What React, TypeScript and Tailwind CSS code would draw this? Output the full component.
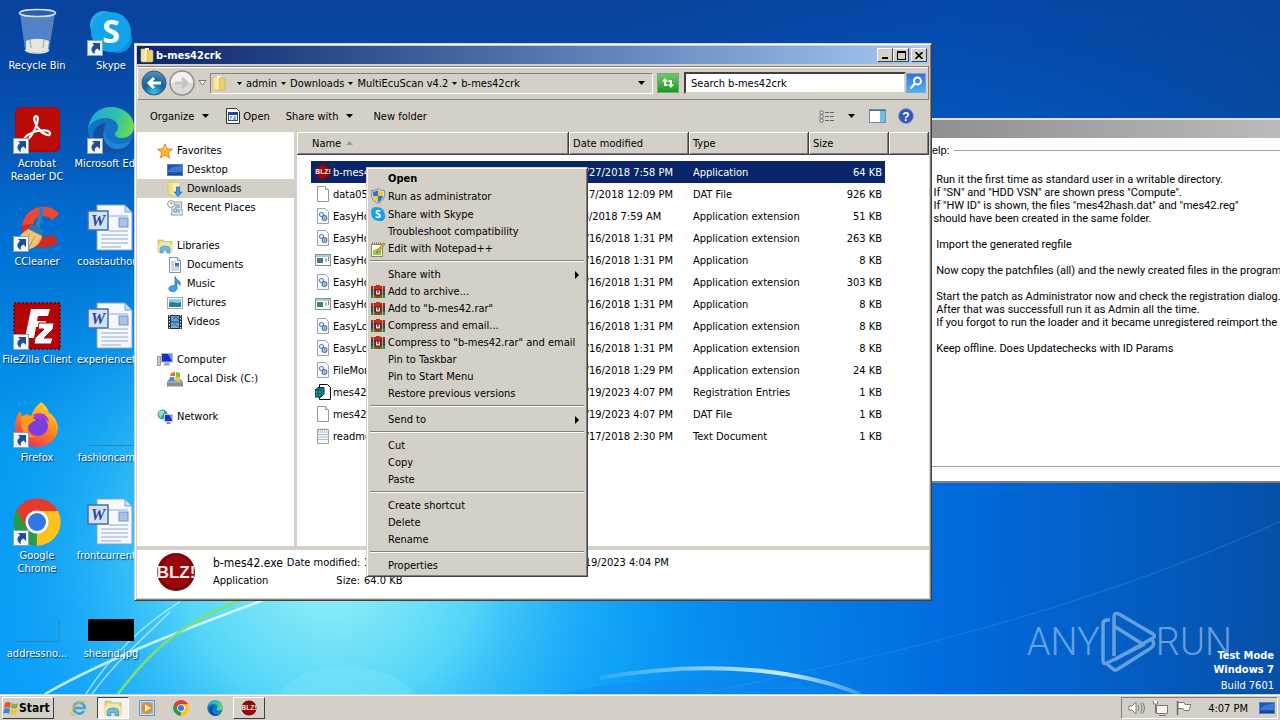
import type { ReactNode } from 'react';

const RAISED = 'border border-t-white border-l-white border-r-[#404040] border-b-[#404040] bg-[#d4d0c8]';
const SUNKEN = 'border border-t-[#808080] border-l-[#808080] border-r-white border-b-white';

/* ---------- icons ---------- */

interface IconProps {
  size?: number;
}

function Svg({ size = 16, box = 16, children }: { size?: number; box?: number; children: ReactNode }) {
  return (
    <svg width={size} height={size} viewBox={`0 0 ${box} ${box}`} className="shrink-0" aria-hidden="true">
      {children}
    </svg>
  );
}

function BlzIcon({ size = 16 }: IconProps) {
  return (
    <Svg size={size} box={40}>
      <circle cx="20" cy="20" r="19" fill="#7c0406" />
      <circle cx="20" cy="20" r="16" fill="#96080a" />
      <text x="20" y="26" textAnchor="middle" fontSize="17" fontWeight="700" fill="#f7e9e6" fontFamily="Liberation Sans, sans-serif">
        BLZ!
      </text>
    </Svg>
  );
}

function SkypeIcon({ size = 16 }: IconProps) {
  return (
    <Svg size={size} box={48}>
      <circle cx="17" cy="17" r="14" fill="#28a8ea" />
      <circle cx="31" cy="31" r="14" fill="#0d8fdc" />
      <circle cx="24" cy="24" r="20" fill="#13a2ec" />
      <text x="24" y="35" textAnchor="middle" fontSize="32" fontWeight="700" fill="#fff" fontFamily="Open Sans, sans-serif">
        S
      </text>
    </Svg>
  );
}

function ChromeIcon({ size = 16 }: IconProps) {
  return (
    <Svg size={size} box={48}>
      <path d="M24 24 3.6 12.5A23.5 23.5 0 0 1 44.4 12.3Z" fill="#e33b2e" />
      <path d="M24 24 44.4 12.3A23.5 23.5 0 0 1 23.5 47.5Z" fill="#fcc31e" />
      <path d="M24 24 23.5 47.5A23.5 23.5 0 0 1 3.6 12.3Z" fill="#2b9a47" />
      <path d="M24 13H44.8A23.5 23.5 0 0 0 3.6 12.3L14 30Z" fill="#e33b2e" />
      <path d="M34 30 23.5 47.5A23.5 23.5 0 0 0 44.8 13H26Z" fill="#fcc31e" />
      <circle cx="24" cy="24" r="11.5" fill="#fff" />
      <circle cx="24" cy="24" r="9" fill="#3277e6" />
    </Svg>
  );
}

function EdgeIcon({ size = 16 }: IconProps) {
  return (
    <Svg size={size} box={48}>
      <defs>
        <linearGradient id="edgeTop" x1="0" x2="1" y1="0.3" y2="0.5">
          <stop offset="0" stopColor="#21a5dc" />
          <stop offset="0.6" stopColor="#2fc2a8" />
          <stop offset="1" stopColor="#6fdc4a" />
        </linearGradient>
      </defs>
      <circle cx="24" cy="24" r="23" fill="#1272c4" />
      <path d="M1.5 20C4 8 13 1 24 1c14 0 23 10 23 19 0 8-6 12-12 12-5 0-7-2-7-4s3-3 3-7c0-5-5-9-12-9C11 12 4 16 1.5 22Z" fill="url(#edgeTop)" />
      <path d="M17 24c-3 10 4 19 14 19 5 0 9-2 12-5-4 7-11 9.500-19 9.500C13 47 6 38 6 30c0-7 6-13 13-13-1 2-2 4-2 7Z" fill="#124f9e" />
      <path d="M17 24c0 7 6 14 15 14 4 0 8-1 11-3-3 6-8 8-13 8-9 0-15-9-13-19Z" fill="#1c87d6" />
    </Svg>
  );
}

function RecycleBinIcon() {
  return (
    <Svg size={48} box={48}>
      <path d="M7 5 12 42c2 3 20 3 24 0L42 5Z" fill="#86aee0" fillOpacity="0.6" />
      <path d="M13 33c6-3 16-3 23 0l-1 9c-5 3-18 3-22 0Z" fill="#e9e6e0" />
      <path d="M14 8l4 32M34 8l-4 32M10 16c8 10 18 12 28 2M11 26l12-10 13 14" stroke="#4f83c8" strokeWidth="1.500" fill="none" opacity="0.5" />
      <ellipse cx="24.500" cy="5" rx="18" ry="3.500" fill="#2d5fa8" stroke="#d8e4f2" strokeWidth="1.500" />
      <path d="M12 42c5 4 20 4 24 0" stroke="#eee" strokeWidth="1.500" fill="none" />
    </Svg>
  );
}

function AcrobatIcon() {
  return (
    <Svg size={48} box={48}>
      <rect x="2" y="1" width="45" height="45" rx="6" fill="#a80808" />
      <rect x="3" y="2" width="43" height="42" rx="5" fill="#bb0b08" />
      <path
        d="M12 34c-2-3 5-7 12-9 6-1 12-1 13 2 1 4-7 2-12-5-4-6-5-11-2-12 3 0 2 6-1 13-3 6-7 12-10 11Z"
        fill="none"
        stroke="#fff"
        strokeWidth="2.200"
        strokeLinejoin="round"
      />
    </Svg>
  );
}

function CCleanerIcon() {
  return (
    <Svg size={48} box={48}>
      <path d="M46 10C38-2 13 0 9 21c-2 16 14 30 36 18l-5-9c-9 7-20 1-20-7 0-9 10-15 19-7Z" fill="#d6281f" />
      <path d="M46 10C38-2 13 0 9 21l11-1c2-9 12-11 19-4Z" fill="#e84b38" />
      <path d="m29 5-5 21" stroke="#2386c4" strokeWidth="4" strokeLinecap="round" />
      <path d="M18 20l13 6-2 6-14-6Z" fill="#2c78ac" />
      <path d="M15 25 29 32C28 40 20 46 10 46 0 42 3 33 15 25Z" fill="#efc479" />
      <path d="m17 30-7 13M22 32l-7 13" stroke="#c9924a" strokeWidth="1" />
    </Svg>
  );
}

function FileZillaIcon() {
  return (
    <Svg size={48} box={48}>
      <rect x="1" y="1" width="46" height="46" fill="#a80204" stroke="#7d0306" strokeWidth="2" strokeDasharray="2 2" />
      <rect x="3" y="3" width="42" height="42" fill="#b50407" />
      <path d="M12 36 18 7h19l-2 7H25l-1 5h9l-1 6h-9l-2 11Z" fill="#fff" />
      <path d="M26 21h15l-1 6-9 9h9l-2 6H21l1-6 9-9h-6Z" fill="#fff" stroke="#b50407" strokeWidth="1" />
    </Svg>
  );
}

function FirefoxIcon() {
  return (
    <Svg size={48} box={48}>
      <defs>
        <linearGradient id="ffBody" x1="0.8" x2="0.2" y1="0" y2="1">
          <stop offset="0" stopColor="#ffe03a" />
          <stop offset="0.45" stopColor="#ff8a1e" />
          <stop offset="1" stopColor="#f0245c" />
        </linearGradient>
      </defs>
      <path d="M28 2c4 3 7 6 8 11 3 1 8 6 9 14 0 11-9 20-21 20C11 47 2 38 2 27c0-7 2-12 5-16l2 5 5-2 4 2c3-8 6-10 10-14Z" fill="url(#ffBody)" />
      <circle cx="25" cy="26" r="10" fill="#7a3ee0" />
      <path d="M8 17c6-3 12 0 15 3-3 1-5 3-8 6-2 6 3 11 9 11-10 3-17-6-16-20Z" fill="#ff9a1f" />
      <path d="M20 15c7-4 15-1 16 7-4-4-9-4-12-3Z" fill="#a33bd4" />
    </Svg>
  );
}

function WordIcon() {
  return (
    <Svg size={48} box={48}>
      <path d="M10 1h28l7 7v38H10Z" fill="#f6faff" stroke="#7da3dc" />
      <path d="M38 1v7h7Z" fill="#c9dcf5" stroke="#7da3dc" />
      <path d="M14 31h27M14 35h27M14 39h27M14 43h20M22 12h19M22 27h19" stroke="#8fa5dc" />
      <rect x="32" y="14" width="9" height="9" fill="#a8c2e8" stroke="#6f92cc" />
      <rect x="1" y="7" width="20" height="19" fill="#d4e2f6" stroke="#4569b4" strokeWidth="1.500" />
      <text x="11" y="22" textAnchor="middle" fontSize="16" fontWeight="700" fontStyle="italic" fill="#27489c" fontFamily="Liberation Serif, serif">
        W
      </text>
    </Svg>
  );
}

function FolderIcon({ size = 16 }: IconProps) {
  return (
    <Svg size={size}>
      <path d="M2 2h5l1 1v12H3L2 14Z" fill="#f7e69a" stroke="#d2b54c" strokeWidth="0.6" />
      <path d="M6 1h4v13H6Z" fill="#fffbe0" />
      <path d="M8 3h5l1 1v10l-1 1H8Z" fill="#efd068" stroke="#c9a43c" strokeWidth="0.6" />
    </Svg>
  );
}

function LibraryIcon({ size = 16 }: IconProps) {
  return (
    <Svg size={size}>
      <path d="M1 2h5l1 1.500h8V14H1Z" fill="#ecd372" stroke="#c3a23f" strokeWidth="0.6" />
      <path d="M3 4h10v4H3Z" fill="#d5f0c4" />
      <path d="M1 6h14v8H1Z" fill="#f5e6a0" />
      <path d="M3 15v-4c0-2 2-3 5-3s5 1 5 3v4h-3v-3H6v3Z" fill="#6bb9e8" stroke="#3a87bd" strokeWidth="0.6" />
    </Svg>
  );
}

function StarIcon() {
  return (
    <Svg>
      <path d="m8 .8 2.100 5 5.400.4-4.200 3.500 1.400 5.300L8 12.200 3.300 15l1.400-5.300L.5 6.200l5.400-.4Z" fill="#ffb52e" stroke="#d97814" strokeWidth="0.8" />
      <path d="m8 3 1.300 3.500H6.700Z" fill="#ffe49a" />
    </Svg>
  );
}

function DesktopIcon({ size = 16 }: IconProps) {
  return (
    <Svg size={size}>
      <rect x="0.500" y="2.500" width="15" height="11" fill="#1c55b4" stroke="#4d80c4" />
      <path d="M1 9C6 3 10 5 15 3v7H1Z" fill="#4a92e2" opacity="0.6" />
      <path d="M1 11.500h14V13H1Z" fill="#24427a" />
    </Svg>
  );
}

function DownloadsIcon() {
  return (
    <Svg>
      <path d="M1 1h6v13H2l-1-1Z" fill="#f7e08c" stroke="#d1b04a" strokeWidth="0.6" />
      <path d="M6 2h6v12H6Z" fill="#fbeeb0" />
      <path d="M9.500 6h3v5H15l-4 4.500L7 11h2.500Z" fill="#2f9be8" stroke="#1668b0" strokeWidth="0.7" />
    </Svg>
  );
}

function RecentIcon() {
  return (
    <Svg>
      <path d="M5 2h10l-1 8h2v5H4l1-4Z" fill="#e4ebf0" stroke="#7a8a94" strokeWidth="0.8" />
      <path d="M8 5h5M8 7h5M7 9h3v3H7ZM12 9v4" stroke="#5f8fae" fill="none" />
      <circle cx="4" cy="4" r="3.400" fill="#fff" stroke="#8a969e" />
      <path d="M4 2v2h1.500" stroke="#555" strokeWidth="0.8" fill="none" />
    </Svg>
  );
}

function DocumentIcon() {
  return (
    <Svg>
      <path d="M2.500.5h8l3 3v12h-11Z" fill="#fff" stroke="#8494a8" />
      <path d="M10.500.5v3h3" fill="#dce6f2" stroke="#8494a8" />
      <path d="M4 5h5M4 7h3M4 9h3M4 11h8M4 13h8" stroke="#8fb0d4" />
      <rect x="8" y="6" width="4" height="3.500" fill="#3a78b8" />
    </Svg>
  );
}

function MusicIcon() {
  return (
    <Svg>
      <path d="M8 .5c1 4 6 3 5 9-1-2-2-3-3-3v6c0 3.500-7 4-8 1S5 9 8 10Z" fill="#3fa0e6" stroke="#1c6fb6" strokeWidth="0.8" />
    </Svg>
  );
}

function PictureIcon() {
  return (
    <Svg>
      <rect x="0.500" y="2.500" width="15" height="11" fill="#fff" stroke="#9aa8b4" />
      <rect x="2" y="4" width="12" height="8" fill="#8cccf0" />
      <path d="M2 8c4-3 7 2 12-1v5H2Z" fill="#2b7c8c" />
    </Svg>
  );
}

function VideoIcon() {
  return (
    <Svg>
      <rect x="1" y="1" width="14" height="14" fill="#2b3038" />
      <path d="M2.500 1v14M13.500 1v14" stroke="#e8eef4" strokeDasharray="1.500 1.500" />
      <rect x="4" y="2" width="8" height="5.500" fill="#5da4dc" />
      <rect x="4" y="8.500" width="8" height="5.500" fill="#6fb4e2" />
      <path d="m6 5 3-2 3 3M5 12l3-2 4 3" stroke="#2d5c86" fill="none" />
    </Svg>
  );
}

function ComputerIcon() {
  return (
    <Svg>
      <rect x="0.500" y="4.500" width="3" height="9" fill="#c4c9d0" stroke="#80868e" strokeWidth="0.7" />
      <rect x="4" y="1" width="12" height="9.500" fill="#aeb8c8" />
      <rect x="5" y="2" width="10" height="7.500" fill="#1a2fd0" />
      <path d="M11 2h4v7Z" fill="#6f9af4" />
      <path d="M8 10.500h4l1 3H6Z" fill="#9aa2ae" />
    </Svg>
  );
}

function DiskIcon() {
  return (
    <Svg>
      <path d="M2 9h12l2 3v3H0v-3Z" fill="#a3abb0" stroke="#5c666c" strokeWidth="0.7" />
      <path d="M1 13h14" stroke="#4b8a50" />
      <path d="M4 2l4-1v4H3Z" fill="#f0682c" />
      <path d="M9 1l4 1v4H9Z" fill="#80bc3c" />
      <path d="M3 6h4v4H2Z" fill="#3c8ce0" />
      <path d="M8 6h5v4H8Z" fill="#f8c52c" />
    </Svg>
  );
}

function NetworkIcon() {
  return (
    <Svg>
      <circle cx="5.500" cy="5.500" r="5" fill="#2f9fbd" />
      <path d="M2 3c3-3 6-1 5 1S4 6 4 9C2 8 1 6 2 3Z" fill="#9be0b4" />
      <rect x="7" y="5" width="9" height="8" fill="#c2cad6" />
      <rect x="8" y="6" width="7" height="6" fill="#1b2fca" />
      <path d="M12 6h3v5Z" fill="#6f94f0" />
      <path d="M10 13h3l1 2H9Z" fill="#8c94a0" />
    </Svg>
  );
}

function BlankFileIcon() {
  return (
    <Svg>
      <path d="M2.500.5h8l3 3v12h-11Z" fill="#fdfdfd" stroke="#9a9a9a" />
      <path d="M10.500.5v3h3" fill="#eee" stroke="#9a9a9a" />
    </Svg>
  );
}

function DllIcon() {
  return (
    <Svg>
      <path d="M2.500.5h8l3 3v12h-11Z" fill="#f6f9fd" stroke="#9aa4b0" />
      <circle cx="6.500" cy="6.500" r="2" fill="#fff" stroke="#5b82b4" strokeWidth="1.200" />
      <circle cx="9.500" cy="10" r="2.300" fill="#dbe7f4" stroke="#4d77ac" strokeWidth="1.200" />
      <circle cx="9.500" cy="10" r="0.800" fill="#3c679e" />
    </Svg>
  );
}

function ExeIcon() {
  return (
    <Svg>
      <rect x="0.500" y="2.500" width="15" height="11" fill="#fff" stroke="#83919b" />
      <path d="M1 4h14" stroke="#b9c5ce" strokeWidth="2" />
      <rect x="2" y="6" width="6" height="5" fill="#3d7f80" />
      <path d="M10 7h2M10 9h2M13.500 5v4" stroke="#76828c" />
    </Svg>
  );
}

function RegIcon() {
  return (
    <Svg>
      <path d="M4.500.5h8l3 3v12h-11Z" fill="#fff" stroke="#111" />
      <path d="m0 6 3-2.500h6V10l-3 3H0Z" fill="#10a5a0" stroke="#0c2c2c" />
      <path d="M0 6h6v7M6 6l3-2.500M3 6v7M0 9.500h6l3-3M6 3.500 3 6" stroke="#0c3d3d" fill="none" strokeWidth="0.8" />
    </Svg>
  );
}

function TextIcon() {
  return (
    <Svg>
      <path d="M2.500 1.500h11v14h-11Z" fill="#f4f8fb" stroke="#9aa4ae" />
      <path d="M3 4h10M3 6.500h10M3 9h10M3 11.500h10" stroke="#a9c0d2" />
      <path d="M3 1.500h10" stroke="#8f9aa4" strokeDasharray="1 1" strokeWidth="2" />
    </Svg>
  );
}

function ShieldIcon() {
  return (
    <Svg>
      <path d="M8 .5c2 1.500 4 2 6.500 2 1 6-1 10-6.500 13C2.500 12.500.5 8.500 1.500 2.500c2.500 0 4.500-.5 6.500-2Z" fill="#dfe6ee" stroke="#6f8aa8" />
      <path d="M8 2v6H3c-.3-1.500-.3-3-.2-4.500C5 3.500 6.500 3 8 2Z" fill="#2f74d0" />
      <path d="M8 2c1.500 1 3 1.500 5.200 1.500.1 1.500.1 3-.2 4.500H8Z" fill="#f5c928" />
      <path d="M8 8H3c.7 3 2 5 5 6.500Z" fill="#f5c928" />
      <path d="M8 8h5c-.7 3-2 5-5 6.500Z" fill="#2f74d0" />
    </Svg>
  );
}

function NotepadIcon() {
  return (
    <Svg>
      <rect x="1.500" y="3.500" width="11" height="12" fill="#fbfbf4" stroke="#8a8a70" />
      <path d="M2 2.500h10" stroke="#777" strokeDasharray="1 1" strokeWidth="2" />
      <path d="M3 10c3-3 6-2 8-4v8H3Z" fill="#8bd048" />
      <path d="m7 10 6-8 2 1-6 8-3 1Z" fill="#e8b83a" stroke="#7a5a14" strokeWidth="0.6" />
    </Svg>
  );
}

function RarIcon() {
  return (
    <Svg>
      <rect x="1" y="2" width="14" height="4" fill="#b02a2a" />
      <rect x="1" y="6" width="14" height="4" fill="#2846b0" />
      <rect x="1" y="10" width="14" height="4" fill="#2c8a38" />
      <path d="M1 6h14M1 10h14" stroke="#222" strokeWidth="0.7" />
      <path d="M3.500 2v12M12.500 2v12" stroke="#d8a43c" />
      <rect x="6" y="1" width="4" height="13" fill="#b83228" />
      <rect x="5.500" y="6" width="5" height="5" fill="#f0d9c8" stroke="#6c1b14" />
      <path d="M8 5v4" stroke="#9c2020" strokeWidth="1.500" />
    </Svg>
  );
}

function OpenAppIcon() {
  return (
    <Svg>
      <path d="M1.500.5h10l3 3v12h-13Z" fill="#fff" stroke="#333" />
      <rect x="3" y="4" width="10" height="9" fill="#1f48a8" />
      <rect x="4" y="7" width="8" height="5" fill="#fff" />
      <path d="M5 9h2M9 9h2M5 11h1M8 11h3" stroke="#1f48a8" />
    </Svg>
  );
}

function WindowsFlag() {
  return (
    <Svg>
      <path d="M2 3c2-1.500 4-1.500 6 0L7 8C5 7 3 7 1 8Z" fill="#e8542c" />
      <path d="M9 3c2 1.500 4 1.500 6 0l-1 5c-2 1-4 1-6 0Z" fill="#79b93a" />
      <path d="M1 9c2-1.500 4-1.500 6 0l-1 5c-2-1.500-4-1.500-6 0Z" fill="#3a86dc" />
      <path d="M8 9c2 1.500 4 1.500 6 0l-1 5c-2 1.500-4 1.500-6 0Z" fill="#f6c22c" />
    </Svg>
  );
}

function IeIcon() {
  return (
    <Svg size={18} box={18}>
      <path d="M14 12a5.500 5.500 0 1 1 .8-3H5" fill="none" stroke="#3da5e4" strokeWidth="2.600" />
      <path d="M16 3c-3-3-13 3-14 10-.5 3 1 4 3 3" fill="none" stroke="#e9b93c" strokeWidth="1.300" />
    </Svg>
  );
}

function MediaPlayerIcon() {
  return (
    <Svg>
      <rect x="0.500" y="0.500" width="15" height="15" fill="#cfe2f2" stroke="#6d94b8" />
      <rect x="2" y="2" width="12" height="12" fill="#8cb8dc" />
      <circle cx="8" cy="8" r="5.500" fill="#f48618" />
      <path d="M6 4.500 12 8l-6 3.500Z" fill="#fff" />
    </Svg>
  );
}

function ShortcutArrow() {
  return (
    <svg width="16" height="16" viewBox="0 0 16 16" className="absolute bottom-0 left-0" aria-hidden="true">
      <rect x="0.500" y="0.500" width="15" height="15" fill="#f2f6fa" stroke="#8ba0b4" />
      <path d="M5 3h8v8l-2.500-2.500C8 10 7 11 8 14c-4-2-5-6-1-9Z" fill="#1f4f96" />
    </svg>
  );
}

function Caret() {
  return (
    <svg width="7" height="4" viewBox="0 0 7 4" className="shrink-0" aria-hidden="true">
      <path d="M0 0h7L3.500 4Z" fill="#000" />
    </svg>
  );
}

/* ---------- desktop ---------- */

interface Shortcut {
  label: string;
  icon: ReactNode;
  link?: boolean;
}

const thumbLine = (
  <Svg size={48} box={48}>
    <path d="M1 45.500h46" stroke="#2a86b4" />
  </Svg>
);

const shortcuts: Shortcut[] = [
  { label: 'Recycle Bin', icon: <RecycleBinIcon /> },
  { label: 'Acrobat Reader DC', icon: <AcrobatIcon />, link: true },
  { label: 'CCleaner', icon: <CCleanerIcon />, link: true },
  { label: 'FileZilla Client', icon: <FileZillaIcon />, link: true },
  { label: 'Firefox', icon: <FirefoxIcon />, link: true },
  { label: 'Google Chrome', icon: <ChromeIcon size={48} />, link: true },
  {
    label: 'addressno...',
    icon: (
      <Svg size={48} box={48}>
        <path d="M2 45.500h44V23" fill="none" stroke="#2a86b4" />
      </Svg>
    ),
  },
  { label: 'Skype', icon: <SkypeIcon size={48} />, link: true },
  { label: 'Microsoft Edge', icon: <EdgeIcon size={48} />, link: true },
  { label: 'coastauthor...', icon: <WordIcon /> },
  { label: 'experiencet...', icon: <WordIcon /> },
  { label: 'fashioncam...', icon: thumbLine },
  { label: 'frontcurrent...', icon: <WordIcon /> },
  {
    label: 'sheand.jpg',
    icon: (
      <Svg size={48} box={48}>
        <path d="M1 23h46v22H1Z" fill="#000" />
      </Svg>
    ),
  },
];

function Wallpaper() {
  return (
    <svg className="absolute inset-0 h-full w-full" viewBox="0 0 1280 692" preserveAspectRatio="none" aria-hidden="true">
      <defs>
        <linearGradient id="sky" x1="0" x2="0" y1="0" y2="1">
          <stop offset="0" stopColor="#0a46a6" />
          <stop offset="0.350" stopColor="#0070d4" />
          <stop offset="0.620" stopColor="#0598ee" />
          <stop offset="1" stopColor="#0a9cfa" />
        </linearGradient>
        <radialGradient id="glow" gradientUnits="userSpaceOnUse" cx="330" cy="560" r="370">
          <stop offset="0" stopColor="#9ef4f6" />
          <stop offset="0.400" stopColor="#5cdcf8" stopOpacity="0.900" />
          <stop offset="1" stopColor="#0aa0fa" stopOpacity="0" />
        </radialGradient>
        <linearGradient id="shade" x1="0" x2="1" y1="0" y2="0">
          <stop offset="0.480" stopColor="#0064d8" stopOpacity="0" />
          <stop offset="0.740" stopColor="#0066dc" stopOpacity="0.900" />
          <stop offset="1" stopColor="#0650a8" />
        </linearGradient>
        <linearGradient id="dusk" x1="0" x2="0" y1="0" y2="1">
          <stop offset="0" stopColor="#07429c" stopOpacity="0.800" />
          <stop offset="0.300" stopColor="#07429c" stopOpacity="0" />
        </linearGradient>
        <linearGradient id="beam" x1="0" x2="1" y1="0" y2="0">
          <stop offset="0" stopColor="#fff" stopOpacity="0.100" />
          <stop offset="0.700" stopColor="#dffaff" stopOpacity="0.900" />
          <stop offset="1" stopColor="#bfeaff" stopOpacity="0.300" />
        </linearGradient>
      </defs>
      <rect width="1280" height="692" fill="url(#sky)" />
      <rect width="1280" height="692" fill="url(#shade)" />
      <rect width="1280" height="692" fill="url(#glow)" />
      <rect width="1280" height="692" fill="url(#dusk)" />
      <path d="M932 42C1050 36 1180 24 1280 0v118H932Z" fill="#0846a0" opacity="0.200" />
      <path d="M280 692c20-36 110-36 135 0Z" fill="#9ff0fc" opacity="0.200" />
      <path d="M45 692C110 655 190 625 300 585" stroke="#e9fdff" strokeWidth="2.500" fill="none" opacity="0.800" />
      <path d="M86 692C110 655 140 625 180 600M92 692C115 660 140 640 170 610" stroke="#c8f6ff" strokeWidth="1.500" fill="none" opacity="0.700" />
      <path d="M118 692C150 650 180 620 250 595" stroke="#7fe070" strokeWidth="2.500" fill="none" />
      <path d="M560 692C640 672 780 672 850 692Z" fill="#1484f0" opacity="0.400" />
      <path d="M600 676C680 662 780 660 860 692" stroke="url(#beam)" strokeWidth="4" fill="none" />
      <path d="M700 692C850 660 1060 620 1280 520" stroke="#5cacf0" strokeWidth="1" fill="none" opacity="0.250" />
    </svg>
  );
}

function DesktopShortcut({ label, icon, link }: Shortcut) {
  return (
    <li className="flex h-[98px] justify-center">
      <button type="button" className="flex w-[74px] flex-col items-center">
        <span className="relative h-12 w-12">
          {icon}
          {link && <ShortcutArrow />}
        </span>
        <span className="mt-[3px] w-[74px] text-center leading-[13px] text-white [text-shadow:1px_1px_1px_#003060]">{label}</span>
      </button>
    </li>
  );
}

function Watermark() {
  return (
    <div className="absolute right-[6px] bottom-0 text-right leading-4 text-white">
      <div className="absolute right-[42px] bottom-[20px] flex items-center font-['Roboto',sans-serif] text-[38px] leading-[64px] font-light text-[#a9cdf2] opacity-60">
        <span>ANY</span>
        <svg width="56" height="64" viewBox="0 0 56 64" fill="none" stroke="currentColor" strokeWidth="3.500" strokeLinejoin="round" aria-hidden="true">
          <path d="M10 10H7q-4 0-4 4v36q0 5 4 3l38-19" />
          <path d="M14 46V7q0-5 5-3l34 20q3 2 0 4L14 50" />
          <path d="M14 16 44 35M7 54l6 5q2 2 5 0l33-21q5-4 1-8" />
        </svg>
        <span>RUN</span>
      </div>
      <p className="relative font-bold leading-[14px]">Test Mode</p>
      <p className="relative font-bold leading-[14px]">Windows 7</p>
      <p className="relative leading-[17px]">Build 7601</p>
    </div>
  );
}

/* ---------- patcher help window ---------- */

const helpText = `   Run it the first time as standard user in a writable directory.
  If "SN" and "HDD VSN" are shown press "Compute".
  If "HW ID" is shown, the files "mes42hash.dat" and "mes42.reg"
  should have been created in the same folder.

   Import the generated regfile

   Now copy the patchfiles (all) and the newly created files in the program folder

   Start the patch as Administrator now and check the registration dialog.
   After that was successfull run it as Admin all the time.
   If you forgot to run the loader and it became unregistered reimport the regfile

   Keep offline. Does Updatechecks with ID Params`;

function HelpWindow() {
  return (
    <section className="absolute top-[118px] left-[900px] h-[365px] w-[420px] border-t-2 border-b-2 border-t-[#e4e1da] border-b-[#808080] bg-white font-['Liberation_Sans',sans-serif]">
      <div className="h-[18px] bg-linear-to-r from-[#8c8c8c] to-[#c0c0c0]" />
      <fieldset className="mt-1 ml-2 h-[325px] border border-r-0 border-[#a0a0a0] pt-[15px]">
        <legend className="ml-[15px] pr-1 leading-4">Help:</legend>
        <pre className="pl-[19px] font-['Roboto',sans-serif] text-[11px] leading-[13px]">{helpText}</pre>
      </fieldset>
    </section>
  );
}

/* ---------- explorer window ---------- */

const crumbs = ['admin', 'Downloads', 'MultiEcuScan v4.2', 'b-mes42crk'];

const navGroups: { title: string; icon: ReactNode; items: { name: string; icon: ReactNode; active?: boolean }[] }[] = [
  {
    title: 'Favorites',
    icon: <StarIcon />,
    items: [
      { name: 'Desktop', icon: <DesktopIcon /> },
      { name: 'Downloads', icon: <DownloadsIcon />, active: true },
      { name: 'Recent Places', icon: <RecentIcon /> },
    ],
  },
  {
    title: 'Libraries',
    icon: <LibraryIcon />,
    items: [
      { name: 'Documents', icon: <DocumentIcon /> },
      { name: 'Music', icon: <MusicIcon /> },
      { name: 'Pictures', icon: <PictureIcon /> },
      { name: 'Videos', icon: <VideoIcon /> },
    ],
  },
  { title: 'Computer', icon: <ComputerIcon />, items: [{ name: 'Local Disk (C:)', icon: <DiskIcon /> }] },
  { title: 'Network', icon: <NetworkIcon />, items: [] },
];

const files = [
  { name: 'b-mes42.exe', date: '12/27/2018 7:58 PM', type: 'Application', size: '64 KB', icon: <BlzIcon />, selected: true },
  { name: 'data05.dat', date: '5/17/2018 12:09 PM', type: 'DAT File', size: '926 KB', icon: <BlankFileIcon /> },
  { name: 'EasyHook.dll', date: '8/8/2018 7:59 AM', type: 'Application extension', size: '51 KB', icon: <DllIcon /> },
  { name: 'EasyHook32.dll', date: '10/16/2018 1:31 PM', type: 'Application extension', size: '263 KB', icon: <DllIcon /> },
  { name: 'EasyHook32Svc.exe', date: '10/16/2018 1:31 PM', type: 'Application', size: '8 KB', icon: <ExeIcon /> },
  { name: 'EasyHook64.dll', date: '10/16/2018 1:31 PM', type: 'Application extension', size: '303 KB', icon: <DllIcon /> },
  { name: 'EasyHook64Svc.exe', date: '10/16/2018 1:31 PM', type: 'Application', size: '8 KB', icon: <ExeIcon /> },
  { name: 'EasyLoad32.dll', date: '10/16/2018 1:31 PM', type: 'Application extension', size: '8 KB', icon: <DllIcon /> },
  { name: 'EasyLoad64.dll', date: '10/16/2018 1:31 PM', type: 'Application extension', size: '8 KB', icon: <DllIcon /> },
  { name: 'FileMonInject.dll', date: '10/16/2018 1:29 PM', type: 'Application extension', size: '24 KB', icon: <DllIcon /> },
  { name: 'mes42.reg', date: '12/19/2023 4:07 PM', type: 'Registration Entries', size: '1 KB', icon: <RegIcon /> },
  { name: 'mes42hash.dat', date: '12/19/2023 4:07 PM', type: 'DAT File', size: '1 KB', icon: <BlankFileIcon /> },
  { name: 'readme.txt', date: '12/17/2018 2:30 PM', type: 'Text Document', size: '1 KB', icon: <TextIcon /> },
];

function TitleBar() {
  return (
    <header className="flex h-[18px] items-center bg-linear-to-r from-[#0a246a] to-[#a6caf0] pr-[2px] pl-[2px]">
      <FolderIcon />
      <h1 className="ml-px flex-1 font-bold text-white">b-mes42crk</h1>
      <button type="button" aria-label="Minimize" className={`flex h-[14px] w-4 items-end justify-center pb-[2px] ${RAISED}`}>
        <span className="h-[2px] w-[6px] bg-black" />
      </button>
      <button type="button" aria-label="Maximize" className={`flex h-[14px] w-4 items-center justify-center ${RAISED}`}>
        <span className="h-[9px] w-[9px] border border-t-2 border-black" />
      </button>
      <button type="button" aria-label="Close" className={`ml-[2px] flex h-[14px] w-4 items-center justify-center ${RAISED}`}>
        <svg width="8" height="7" viewBox="0 0 8 7" aria-hidden="true">
          <path d="m.5 0 7 7M7.500 0l-7 7" stroke="#000" strokeWidth="1.600" />
        </svg>
      </button>
    </header>
  );
}

function AddressBar() {
  return (
    <div className="mt-[2px] flex h-[34px] items-center border border-t-[#808080] border-l-white border-r-[#808080] border-b-[#808080] pr-[2px] pl-[3px] shadow-[inset_0_1px_0_#fff]">
      <button type="button" aria-label="Back">
        <svg width="26" height="26" viewBox="0 0 26 26" aria-hidden="true">
          <defs>
            <radialGradient id="backFill" cx="0.5" cy="0.9" r="0.9">
              <stop offset="0" stopColor="#35c4ee" />
              <stop offset="0.500" stopColor="#14629e" />
              <stop offset="1" stopColor="#5d94bc" />
            </radialGradient>
          </defs>
          <circle cx="13" cy="13" r="12" fill="url(#backFill)" stroke="#38566e" />
          <path d="M20 13H8m5-5-5 5 5 5" stroke="#fff" strokeWidth="3" fill="none" />
        </svg>
      </button>
      <button type="button" aria-label="Forward" className="ml-[2px]">
        <svg width="26" height="26" viewBox="0 0 26 26" aria-hidden="true">
          <circle cx="13" cy="13" r="12" fill="#dcdad6" stroke="#8e8e8c" strokeWidth="1.500" />
          <path d="M2 13a11 11 0 0 1 22 0Z" fill="#f2f1ef" />
          <path d="M6 13h12m-5-5 5 5-5 5" stroke="#c6c4c0" strokeWidth="3" fill="none" />
        </svg>
      </button>
      <svg width="9" height="6" viewBox="0 0 9 6" className="mx-[3px]" aria-hidden="true">
        <path d="M1 .5h7L4.500 5Z" fill="#fff" stroke="#777" />
      </svg>
      <nav className={`flex h-[21px] flex-1 items-center ${SUNKEN}`}>
        <FolderIcon />
        <span className="w-[6px]" />
        {crumbs.map((crumb) => (
          <a key={crumb} href="#" className="flex items-center gap-1 pl-1">
            <svg width="5" height="3" viewBox="0 0 5 3" className="shrink-0" aria-hidden="true">
              <path d="M0 0h5L2.500 3Z" fill="#000" />
            </svg>
            {crumb}
          </a>
        ))}
        <button type="button" aria-label="Previous locations" className="mr-[7px] ml-auto">
          <Caret />
        </button>
      </nav>
      <button type="button" aria-label="Refresh" className="ml-1 flex h-5 w-[22px] items-center justify-center border border-[#74a978] bg-linear-to-b from-[#6cc96c] to-[#129a20]">
        <svg width="16" height="14" viewBox="0 0 16 14" aria-hidden="true">
          <path d="M2 5.500 5 2l3 3.500H6V8h1.500v2H4V5.500ZM14 8.500 11 12 8 8.500h2V6H8.500V4H12v4.500Z" fill="#fff" />
        </svg>
      </button>
      <input
        type="text"
        aria-label="Search b-mes42crk"
        placeholder="Search b-mes42crk"
        className="ml-[5px] h-[22px] w-[222px] border-2 border-t-[#404040] border-l-[#404040] border-r-[#d4d0c8] border-b-[#d4d0c8] bg-white pl-[5px] placeholder:text-black"
      />
      <button type="button" aria-label="Search" className="flex h-5 w-5 items-center justify-center border border-[#7fa6dc] bg-linear-to-b from-[#3a6fd8] to-[#48b4ee]">
        <svg width="14" height="14" viewBox="0 0 14 14" fill="none" stroke="#fff" strokeWidth="2" aria-hidden="true">
          <circle cx="8.500" cy="5" r="3.500" />
          <path d="m6 7.500-4.500 5" />
        </svg>
      </button>
    </div>
  );
}

function Toolbar() {
  return (
    <div className="flex h-8 items-center pl-[13px] pr-[15px]">
      <button type="button" className="flex items-center gap-2">
        Organize <Caret />
      </button>
      <button type="button" className="ml-4 flex items-center gap-[2px]">
        <OpenAppIcon /> Open
      </button>
      <button type="button" className="ml-4 flex items-center gap-2">
        Share with <Caret />
      </button>
      <button type="button" className="ml-5">New folder</button>
      <button type="button" aria-label="Change view" className="ml-auto flex items-center gap-[13px]">
        <svg width="16" height="13" viewBox="0 0 16 13" aria-hidden="true">
          <path d="M6 2.500h4M11 2.500h4M6 6.500h4M11 6.500h4M6 10.500h4M11 10.500h4" stroke="#5a6272" />
          <path d="M1 1h3v3H1ZM1 5h3v3H1ZM1 9h3v3H1Z" fill="#fff" stroke="#6a7282" />
        </svg>
        <Caret />
      </button>
      <button type="button" aria-label="Preview pane" className="ml-[14px]">
        <svg width="17" height="14" viewBox="0 0 17 14" className="block" aria-hidden="true">
          <rect x="0.500" y="0.500" width="16" height="13" fill="#fff" stroke="#6c8cb0" />
          <path d="M1 1.500h15" stroke="#3c70b8" />
          <rect x="11" y="2" width="5" height="11" fill="#6cc0e4" />
        </svg>
      </button>
      <button type="button" aria-label="Help" className="ml-3">
        <svg width="16" height="16" viewBox="0 0 16 16" className="block" aria-hidden="true">
          <circle cx="8" cy="8" r="7.500" fill="#3558b8" stroke="#8aa0d0" />
          <text x="8" y="12.500" textAnchor="middle" fontSize="12" fontWeight="700" fill="#fff" fontFamily="Liberation Sans, sans-serif">
            ?
          </text>
        </svg>
      </button>
    </div>
  );
}

function NavPane() {
  return (
    <nav className="flex w-[157px] shrink-0 flex-col gap-[19px] bg-white pt-[9px]">
      {navGroups.map((group) => (
        <div key={group.title}>
          <a href="#" className="flex h-[19px] items-center gap-1 pl-5">
            {group.icon}
            {group.title}
          </a>
          {group.items.map((item) => (
            <a key={item.name} href="#" className={`flex h-[19px] items-center gap-1 pl-[30px] ${item.active ? 'bg-[#d4d0c8]' : ''}`}>
              {item.icon}
              {item.name}
            </a>
          ))}
        </div>
      ))}
    </nav>
  );
}

function FileTable() {
  const th = `h-[23px] pl-1 text-left font-normal border-r border-b border-r-[#404040] border-b-[#404040] bg-[#d4d0c8] shadow-[inset_1px_1px_0_#fff,inset_-1px_-1px_0_#808080]`;
  return (
    <div className="flex-1 bg-white">
      <table className="w-full table-fixed border-separate border-spacing-0">
        <colgroup>
          <col className="w-[14px]" />
          <col className="w-[258px]" />
          <col className="w-[120px]" />
          <col className="w-[120px]" />
          <col className="w-[76px]" />
          <col className="w-1" />
          <col />
        </colgroup>
        <thead>
          <tr>
            <th colSpan={2} className={`${th} pl-[15px]`}>
              <span className="flex items-center gap-[5px]">
                Name
                <svg width="7" height="4" viewBox="0 0 7 4" aria-hidden="true">
                  <path d="M0 4h7L3.500 0Z" fill="#999" />
                </svg>
              </span>
            </th>
            <th className={th}>Date modified</th>
            <th className={th}>Type</th>
            <th colSpan={2} className={th}>Size</th>
            <th className={th} aria-label="More columns" />
          </tr>
          <tr className="h-[6px]" aria-hidden="true" />
        </thead>
        <tbody>
          {files.map((file) => (
            <tr key={file.name} className={`h-[22px] whitespace-nowrap ${file.selected ? 'text-white [&>td:nth-child(n+2):nth-child(-n+5)]:bg-[#0a246a]' : ''}`}>
              <td />
              <td>
                <span className="flex items-center gap-[2px] pl-1">
                  {file.icon}
                  {file.name}
                </span>
              </td>
              <td className="pl-1">{file.date}</td>
              <td className="pl-1">{file.type}</td>
              <td className="pr-[3px] text-right">{file.size}</td>
            </tr>
          ))}
        </tbody>
      </table>
    </div>
  );
}

function DetailsPane() {
  return (
    <footer className="mt-[4px] flex h-12 items-center bg-white pb-1 pl-[19px]">
      <BlzIcon size={40} />
      <div className="ml-[17px] flex flex-col gap-[2px] leading-4">
        <div className="flex items-center gap-1">
          <span className="text-xs">b-mes42.exe</span>
          <span className="w-[73px] text-right whitespace-nowrap">Date modified:</span>
          <span className="w-[112px]">12/27/2018 7:58 PM</span>
          <span className="w-[85px] text-right">Date created:</span>
          <span>12/19/2023 4:04 PM</span>
        </div>
        <div className="flex items-center gap-1">
          <span className="w-[71px]">Application</span>
          <span className="w-[72px] text-right">Size:</span>
          <span>64.0 KB</span>
        </div>
      </div>
    </footer>
  );
}

function ExplorerWindow() {
  return (
    <section className="absolute top-[43px] left-[134px] flex h-[558px] w-[798px] flex-col border border-t-[#d4d0c8] border-l-[#d4d0c8] border-r-[#404040] border-b-[#404040] bg-[#d4d0c8] p-[2px] shadow-[inset_1px_1px_0_#fff,inset_-1px_-1px_0_#808080]">
      <TitleBar />
      <AddressBar />
      <Toolbar />
      <div className="flex min-h-0 flex-1 gap-[3px]">
        <NavPane />
        <FileTable />
      </div>
      <DetailsPane />
    </section>
  );
}

/* ---------- context menu ---------- */

interface MenuEntry {
  label: string;
  icon?: ReactNode;
  bold?: boolean;
  tall?: boolean;
  submenu?: boolean;
}

const menuGroups: MenuEntry[][] = [
  [
    { label: 'Open', bold: true },
    { label: 'Run as administrator', icon: <ShieldIcon />, tall: true },
    { label: 'Share with Skype', icon: <SkypeIcon />, tall: true },
    { label: 'Troubleshoot compatibility' },
    { label: 'Edit with Notepad++', icon: <NotepadIcon /> },
  ],
  [
    { label: 'Share with', submenu: true },
    { label: 'Add to archive...', icon: <RarIcon /> },
    { label: 'Add to "b-mes42.rar"', icon: <RarIcon /> },
    { label: 'Compress and email...', icon: <RarIcon /> },
    { label: 'Compress to "b-mes42.rar" and email', icon: <RarIcon /> },
    { label: 'Pin to Taskbar' },
    { label: 'Pin to Start Menu' },
    { label: 'Restore previous versions' },
  ],
  [{ label: 'Send to', submenu: true }],
  [{ label: 'Cut' }, { label: 'Copy' }, { label: 'Paste' }],
  [{ label: 'Create shortcut' }, { label: 'Delete' }, { label: 'Rename' }],
  [{ label: 'Properties' }],
];

function ContextMenu() {
  return (
    <div
      role="menu"
      className="absolute top-[167px] left-[366px] w-[222px] border border-t-[#d4d0c8] border-l-[#d4d0c8] border-r-[#404040] border-b-[#404040] bg-[#d4d0c8] p-[2px] shadow-[inset_1px_1px_0_#fff,inset_-1px_-1px_0_#808080]"
    >
      {menuGroups.map((group, i) => (
        <div key={group[0].label}>
          {i > 0 && <hr className="mx-px mt-[3px] mb-1 h-[2px] border-t border-b border-t-[#808080] border-b-white" />}
          {group.map((entry) => (
            <button
              key={entry.label}
              type="button"
              role="menuitem"
              className={`flex w-full items-center pl-px text-left whitespace-nowrap ${entry.tall ? 'h-[18px]' : 'h-[17px]'} ${entry.bold ? 'font-bold' : ''}`}
            >
              <span className="mr-[2px] w-4">{entry.icon}</span>
              {entry.label}
              {entry.submenu && (
                <svg width="4" height="8" viewBox="0 0 4 8" className="mr-[6px] ml-auto" aria-hidden="true">
                  <path d="M0 0v8l4-4Z" fill="#000" />
                </svg>
              )}
            </button>
          ))}
        </div>
      ))}
    </div>
  );
}

/* ---------- taskbar ---------- */

function Taskbar() {
  const launch = 'flex h-[22px] w-8 items-center justify-center';
  return (
    <footer className="flex h-7 items-center border-t border-[#d4d0c8] bg-[#d4d0c8] px-[2px] pb-px shadow-[inset_0_1px_0_#fff]">
      <button type="button" className={`flex h-[22px] w-[52px] items-center text-xs font-bold ${RAISED}`}>
        <WindowsFlag /> Start
      </button>
      <div className="ml-[9px] flex items-center gap-[2px]">
        <button type="button" aria-label="Internet Explorer" className={launch}>
          <IeIcon />
        </button>
        <button type="button" aria-label="Windows Explorer" className={`${launch} border border-t-[#404040] border-l-[#404040] border-r-white border-b-white bg-[#f4f2ee]`}>
          <LibraryIcon size={18} />
        </button>
        <button type="button" aria-label="Windows Media Player" className={launch}>
          <MediaPlayerIcon />
        </button>
        <button type="button" aria-label="Google Chrome" className={launch}>
          <ChromeIcon />
        </button>
        <button type="button" aria-label="Microsoft Edge" className={launch}>
          <EdgeIcon />
        </button>
        <button type="button" aria-label="b-mes42" className={`${launch} ${RAISED}`}>
          <BlzIcon />
        </button>
      </div>
      <div className={`ml-auto flex h-[22px] items-center pr-[2px] pl-[6px] ${SUNKEN}`}>
        <svg width="64" height="16" viewBox="0 0 64 16" fill="none" stroke="#777" aria-hidden="true">
          <path d="M1 6h3l4-4v12l-4-4H1Z" fill="#fff" />
          <path d="M10 5q2 3 0 6M12 3q4 5 0 10M14 2q5 6 0 12" />
          <path d="M28.500 5.500h11v8h-11ZM31 15.500h7" fill="#f4f4f4" />
          <path d="M25.500 1v3h4V1M27.500 4v9" fill="#fff" />
          <path d="M49.500 1v14" stroke="#666" strokeWidth="1.500" />
          <path d="M50 2.500h6l1 2h6l-2 6h-5l-1-2h-5Z" fill="#fff" />
        </svg>
        <time className="ml-4">4:07 PM</time>
        <button type="button" aria-label="Show desktop" className="ml-[11px]">
          <DesktopIcon size={16} />
        </button>
      </div>
    </footer>
  );
}

export default function App() {
  return (
    <div className="flex min-h-screen flex-col overflow-hidden font-['DejaVu_Sans_Condensed','Noto_Sans',sans-serif] text-[11px] leading-[13px] text-black">
      <main className="relative flex-1 overflow-hidden bg-[#0078dc]">
        <Wallpaper />
        <ul className="relative grid w-[148px] grid-flow-col grid-rows-7 pt-2">
          {shortcuts.map((item) => (
            <DesktopShortcut key={item.label} {...item} />
          ))}
        </ul>
        <Watermark />
        <HelpWindow />
        <ExplorerWindow />
        <ContextMenu />
      </main>
      <Taskbar />
    </div>
  );
}
